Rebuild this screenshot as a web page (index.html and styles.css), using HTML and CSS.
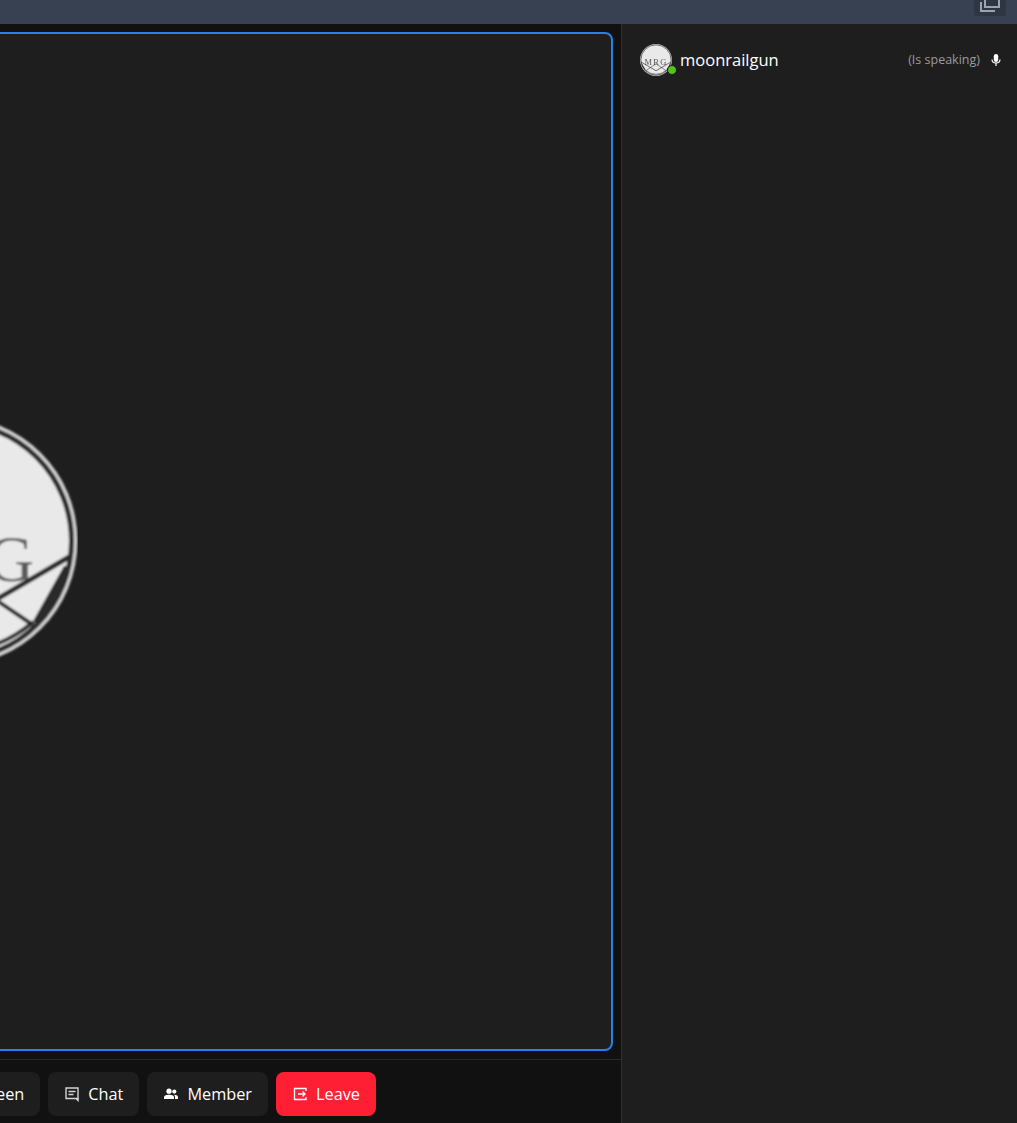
FILE: index.html
```html
<!DOCTYPE html>
<html lang="en">
<head>
    <meta charset="UTF-8">
    <title>Meeting</title>
    <link rel="stylesheet" href="styles.css">
</head>
<body>
    <svg class="defs" width="0" height="0">
        <filter id="soft"><feGaussianBlur stdDeviation="0.9"/></filter>
        <symbol id="logo" viewBox="0 0 250 250">
            <g filter="url(#soft)">
                <circle cx="125" cy="125" r="124.5" fill="#d2d2d2"/>
                <circle cx="125" cy="125" r="118.5" fill="#e9e9e9" stroke="#2b2b2b" stroke-width="5"/>
                <text x="126" y="165" class="logo-text" text-anchor="middle">MRG</text>
                <g fill="none" stroke="#2b2b2b">
                    <path d="M241 141 L125 209 L9 141" stroke-width="5"/>
                    <path d="M205 209 L125 155 L45 209" stroke-width="4"/>
                    <path d="M205 206 Q170 236 125 236 Q80 236 45 206" stroke-width="4"/>
                </g>
                <path class="wedge" d="M236 150 L204 207 L211 206 A118 118 0 0 0 240 150 Z"/>
                <path class="wedge" d="M14 150 L46 207 L39 206 A118 118 0 0 1 10 150 Z"/>
            </g>
        </symbol>
    </svg>

    <div class="topbar">
        <div class="top-btn">
            <svg width="20" height="20" viewBox="0 0 20 20" fill="none" stroke="#9ca3af" stroke-width="2">
                <rect x="5" y="-6" width="14" height="13"/>
                <path d="M1 2 V11 H15"/>
            </svg>
        </div>
    </div>

    <div class="content">
        <div class="main">
            <div class="stage-wrap">
                <div class="stage">
                    <svg class="big-logo"><use href="#logo"/></svg>
                </div>
            </div>
            <div class="toolbar">
                <div class="tool">
                    <span>Screen</span>
                </div>
                <div class="tool">
                    <svg width="16" height="16" viewBox="0 0 16 16" fill="none" stroke="#d4d4d4" stroke-width="1.4">
                        <path d="M2 2 H14 V12.5 H2 Z"/>
                        <path d="M4.5 5.5 H11.5 M4.5 8.5 H9.5"/>
                        <path d="M12 12.5 L14 14.5 V12" fill="#d4d4d4"/>
                    </svg>
                    <span>Chat</span>
                </div>
                <div class="tool">
                    <svg width="16" height="16" viewBox="0 0 16 16" fill="#fff">
                        <circle cx="6" cy="5.2" r="2.6"/>
                        <circle cx="11.3" cy="5.6" r="2.1"/>
                        <path d="M1 13 V11.2 C1 9.4 3.6 8.7 6 8.7 S11 9.4 11 11.2 V13 Z"/>
                        <path d="M12 13 V11 C12 10.2 11.6 9.4 10.9 8.8 C13 8.8 15 9.6 15 11 V13 Z"/>
                    </svg>
                    <span>Member</span>
                </div>
                <div class="tool leave">
                    <svg width="16" height="16" viewBox="0 0 16 16" fill="none" stroke="#fff" stroke-width="1.3">
                        <path d="M14 5 V2.5 H2.5 V13.5 H14 V11"/>
                        <path d="M6 8 H13 M10.5 5.5 L13 8 L10.5 10.5"/>
                    </svg>
                    <span>Leave</span>
                </div>
            </div>
        </div>

        <div class="sidebar">
            <div class="member">
                <div class="avatar">
                    <svg class="small-logo"><use href="#logo"/></svg>
                    <span class="online"></span>
                </div>
                <span class="member-name">moonrailgun</span>
                <span class="member-status">(Is speaking)</span>
                <svg class="mic" width="16" height="16" viewBox="0 0 16 16" fill="#fff">
                    <rect x="5.8" y="2" width="4.4" height="8" rx="2.2"/>
                    <path d="M4 7.5 C4 10 5.8 11 8 11 S12 10 12 7.5" fill="none" stroke="#fff" stroke-width="1.2"/>
                    <rect x="7.4" y="11" width="1.2" height="3"/>
                </svg>
            </div>
        </div>
    </div>
</body>
</html>
```

FILE: styles.css
```css
html, body {
    margin: 0;
    height: 100%;
    overflow: hidden;
}

body {
    font-family: "Open Sans", "Noto Sans", sans-serif;
    background-color: #1e1e1e;
    color: #fff;
    display: flex;
    flex-direction: column;
}

.defs {
    display: block;
    height: 0;
}

.logo-text {
    font-family: "Liberation Serif", serif;
    font-size: 66px;
    letter-spacing: 10px;
    fill: #5a5a5a;
}

.wedge {
    fill: #2b2b2b;
}

.topbar {
    height: 24px;
    flex-shrink: 0;
    background-color: #374151;
    display: flex;
    justify-content: flex-end;
    align-items: flex-end;
    padding-right: 11px;
    box-sizing: border-box;
    padding-bottom: 8px;
}

.top-btn {
    width: 32px;
    height: 16px;
    background-color: #2e3644;
    border-radius: 0 0 3px 3px;
    display: flex;
    justify-content: center;
    overflow: hidden;
}

.content {
    flex: 1;
    display: flex;
    min-height: 0;
}

.main {
    width: 1327px;
    margin-left: -706px;
    flex-shrink: 0;
    display: flex;
    flex-direction: column;
    background-color: #111;
}

.stage-wrap {
    flex: 1;
    padding: 8px;
    border-bottom: 1px solid #2a2a2a;
    display: flex;
    background-color: #111;
}

.stage {
    flex: 1;
    background-color: #1e1e1e;
    border: 2px solid #2383e8;
    border-radius: 8px;
    display: flex;
    align-items: center;
    justify-content: center;
}

.big-logo {
    width: 250px;
    height: 250px;
    margin-right: 10px;
    margin-bottom: 2px;
}

.toolbar {
    height: 63px;
    box-sizing: border-box;
    padding-top: 5px;
    flex-shrink: 0;
    display: flex;
    align-items: center;
    justify-content: flex-end;
    gap: 8px;
    padding-right: 245px;
}

.tool {
    height: 44px;
    padding: 0 16px;
    background-color: #1e1e1e;
    border-radius: 8px;
    display: flex;
    align-items: center;
    gap: 8px;
    font-size: 16.3px;
}

.leave {
    background-color: #ff1f35;
}

.sidebar {
    flex: 1;
    border-left: 1px solid #303030;
    padding: 20px 13px 0 18px;
}

.member {
    display: flex;
    align-items: center;
    height: 32px;
}

.avatar {
    position: relative;
    width: 32px;
    height: 32px;
    margin-right: 8px;
}

.small-logo {
    width: 32px;
    height: 32px;
    display: block;
}

.online {
    position: absolute;
    right: -5px;
    bottom: 1px;
    width: 8px;
    height: 8px;
    border-radius: 50%;
    background-color: #52c41a;
    border: 1px solid #1e1e1e;
}

.member-name {
    flex: 1;
    font-size: 16.5px;
    margin-bottom: 2px;
}

.member-status {
    font-size: 12.5px;
    color: #9b9b9b;
    margin-right: 8px;
    margin-bottom: 2px;
}
```
